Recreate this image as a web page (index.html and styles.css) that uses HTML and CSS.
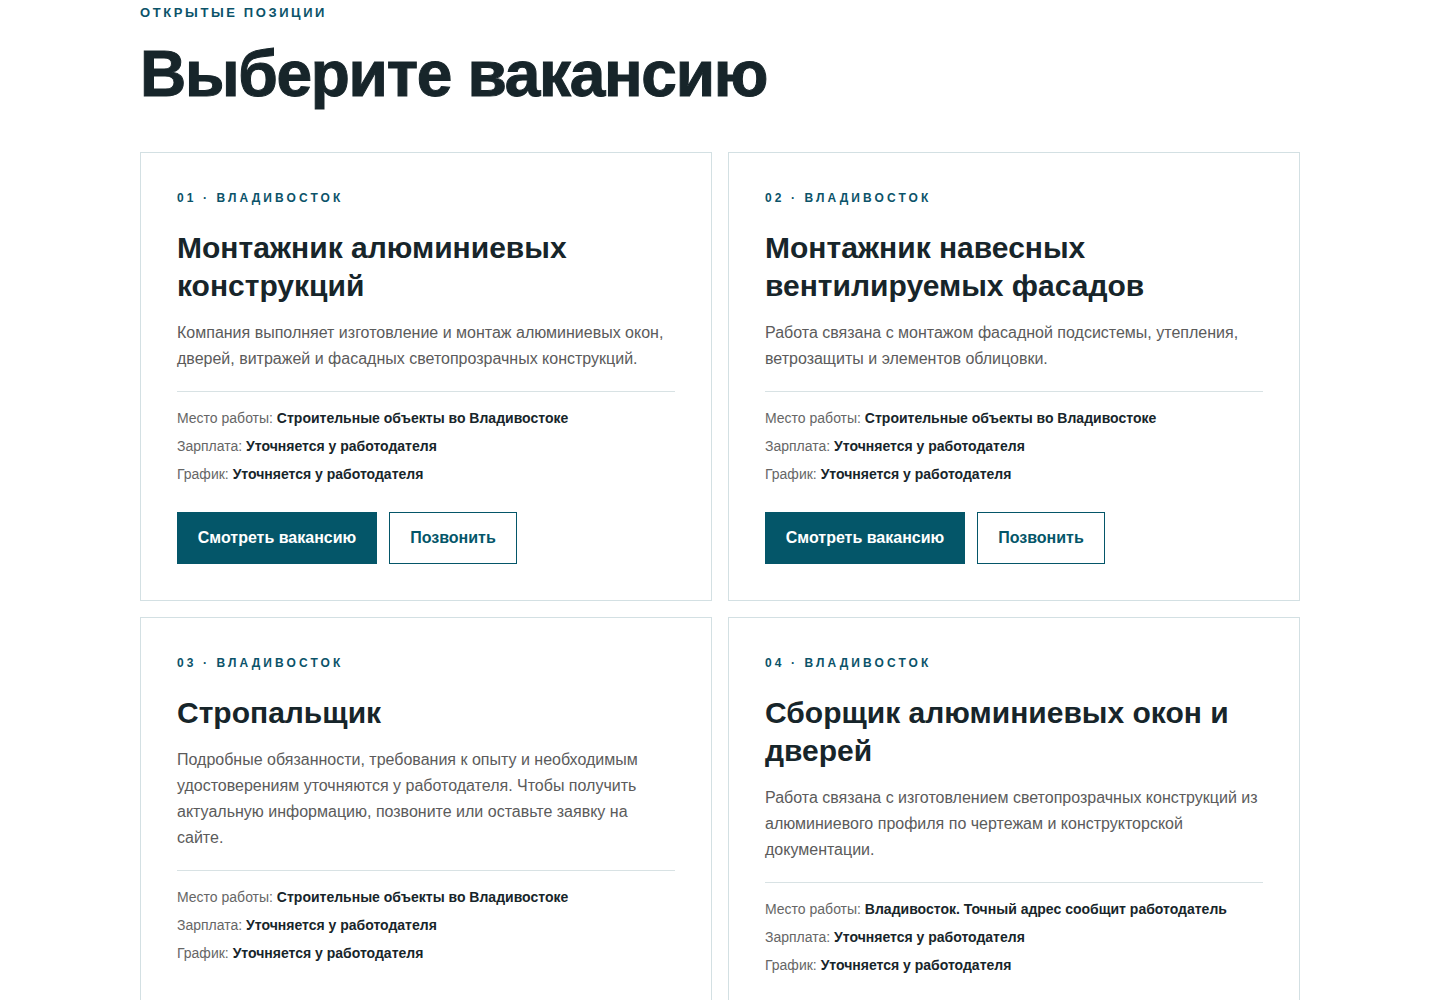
FILE: index.html
```html
<!DOCTYPE html>
<html lang="ru">
<head>
    <meta charset="utf-8">
    <title>Вакансии</title>
    <link rel="stylesheet" href="styles.css">
</head>
<body>

    <div class="vacancies">
        <div class="eyebrow">Открытые позиции</div>
        <h1 class="page-title">Выберите вакансию</h1>

        <div class="grid">
            <div class="card">
                <div class="card-tag">01 · Владивосток</div>
                <h2 class="card-title">Монтажник алюминиевых конструкций</h2>
                <p class="card-text">Компания выполняет изготовление и монтаж алюминиевых окон, дверей, витражей и фасадных светопрозрачных конструкций.</p>
                <div class="meta">
                    <div>Место работы: <b>Строительные объекты во Владивостоке</b></div>
                    <div>Зарплата: <b>Уточняется у работодателя</b></div>
                    <div>График: <b>Уточняется у работодателя</b></div>
                </div>
                <div class="actions">
                    <a class="btn btn-primary" href="#">Смотреть вакансию</a>
                    <a class="btn btn-outline" href="#">Позвонить</a>
                </div>
            </div>

            <div class="card">
                <div class="card-tag">02 · Владивосток</div>
                <h2 class="card-title">Монтажник навесных вентилируемых фасадов</h2>
                <p class="card-text">Работа связана с монтажом фасадной подсистемы, утепления, ветрозащиты и элементов облицовки.</p>
                <div class="meta">
                    <div>Место работы: <b>Строительные объекты во Владивостоке</b></div>
                    <div>Зарплата: <b>Уточняется у работодателя</b></div>
                    <div>График: <b>Уточняется у работодателя</b></div>
                </div>
                <div class="actions">
                    <a class="btn btn-primary" href="#">Смотреть вакансию</a>
                    <a class="btn btn-outline" href="#">Позвонить</a>
                </div>
            </div>

            <div class="card">
                <div class="card-tag">03 · Владивосток</div>
                <h2 class="card-title">Стропальщик</h2>
                <p class="card-text">Подробные обязанности, требования к опыту и необходимым удостоверениям уточняются у работодателя. Чтобы получить актуальную информацию, позвоните или оставьте заявку на сайте.</p>
                <div class="meta">
                    <div>Место работы: <b>Строительные объекты во Владивостоке</b></div>
                    <div>Зарплата: <b>Уточняется у работодателя</b></div>
                    <div>График: <b>Уточняется у работодателя</b></div>
                </div>
                <div class="actions">
                    <a class="btn btn-primary" href="#">Смотреть вакансию</a>
                    <a class="btn btn-outline" href="#">Позвонить</a>
                </div>
            </div>

            <div class="card">
                <div class="card-tag">04 · Владивосток</div>
                <h2 class="card-title">Сборщик алюминиевых окон и дверей</h2>
                <p class="card-text">Работа связана с изготовлением светопрозрачных конструкций из алюминиевого профиля по чертежам и конструкторской документации.</p>
                <div class="meta">
                    <div>Место работы: <b>Владивосток. Точный адрес сообщит работодатель</b></div>
                    <div>Зарплата: <b>Уточняется у работодателя</b></div>
                    <div>График: <b>Уточняется у работодателя</b></div>
                </div>
                <div class="actions">
                    <a class="btn btn-primary" href="#">Смотреть вакансию</a>
                    <a class="btn btn-outline" href="#">Позвонить</a>
                </div>
            </div>
        </div>
    </div>

</body>
</html>
```

FILE: styles.css
```css
body {
    margin: 0;
    background: #fff;
    color: #17252a;
    font-family: "Liberation Sans", Arial, sans-serif;
}

.vacancies {
    width: 1160px;
    margin: 0 auto;
    padding-top: 4px;
}

.eyebrow {
    font-size: 13px;
    line-height: 18px;
    font-weight: bold;
    letter-spacing: 2.6px;
    text-transform: uppercase;
    color: #0b5369;
}

.page-title {
    margin: 16px 0 42px;
    font-size: 64px;
    line-height: 72px;
    font-weight: bold;
    letter-spacing: -1.3px;
    -webkit-text-stroke: 1px #17252a;
    color: #17252a;
}

.grid {
    display: grid;
    grid-template-columns: 1fr 1fr;
    gap: 16px;
}

.card {
    border: 1px solid #d3e0e3;
    padding: 36px;
    display: flex;
    flex-direction: column;
}

.card-tag {
    font-size: 12px;
    line-height: 18px;
    font-weight: bold;
    letter-spacing: 3.1px;
    text-transform: uppercase;
    color: #0b5369;
}

.card-title {
    margin: 22px 0 0;
    font-size: 30px;
    line-height: 38px;
    font-weight: bold;
    color: #17252a;
}

.card-text {
    margin: 15px 0 0;
    font-size: 16px;
    line-height: 26px;
    color: #5b5b5b;
}

.meta {
    margin-top: 19px;
    padding-top: 12px;
    border-top: 1px solid #d8e2e4;
    font-size: 14px;
    line-height: 28px;
    color: #666;
}

.meta b {
    color: #17252a;
}

/* buttons sit at the bottom so a row of cards lines up */
.actions {
    display: flex;
    gap: 12px;
    margin-top: auto;
    padding-top: 24px;
}

.btn {
    display: inline-flex;
    align-items: center;
    justify-content: center;
    height: 52px;
    box-sizing: border-box;
    font-size: 16px;
    font-weight: bold;
    text-decoration: none;
}

.btn-primary {
    width: 200px;
    background: #045669;
    color: #fff;
}

.btn-outline {
    width: 128px;
    border: 1px solid #045669;
    color: #045669;
}
```
